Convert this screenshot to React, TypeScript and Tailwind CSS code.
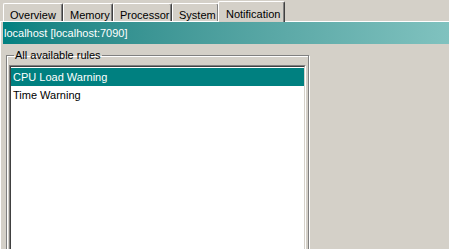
const tabs = [
  { label: "Overview", w: "w-[60px]" },
  { label: "Memory", w: "w-[50px]" },
  { label: "Processor", w: "w-[59px]" },
  { label: "System", w: "w-[47px]" },
];

const rules = ["CPU Load Warning", "Time Warning"];

export default function App() {
  return (
    <div className="w-[449px] h-[249px] overflow-hidden bg-[#d4d0c8] text-[11px] text-black font-['Liberation_Sans',Arial,sans-serif]">
      {/* tab strip */}
      <div className="h-[21px] flex items-end pl-[3px]">
        {tabs.map((t) => (
          <div
            key={t.label}
            className={`${t.w} h-[18px] flex items-start pt-[3px] pl-[6px] border-t border-l border-r border-t-white border-l-white border-r-[#404040] rounded-tl-[2px] rounded-tr-[2px] shadow-[inset_-1px_0_0_#808080]`}
          >
            {t.label}
          </div>
        ))}
        <div className="w-[67px] h-[21px] -ml-[1px] -mb-[1px] relative z-10 flex items-start pt-[4px] pl-[7px] border-t border-l border-r border-t-white border-l-white border-r-[#404040] rounded-tl-[2px] rounded-tr-[2px] shadow-[inset_-1px_0_0_#808080] bg-[#d4d0c8]">
          Notification
        </div>
      </div>

      {/* panel */}
      <div className="border-t border-l border-white pl-[2px]">
        <div className="h-[22px] flex items-center pl-[1px] text-[11px] text-white bg-gradient-to-r from-[#008080] to-[#80c2bf]">
          localhost [localhost:7090]
        </div>

        <fieldset className="ml-[3px] mt-[5px] w-[303px] h-[230px] border border-[#808080] shadow-[inset_1px_1px_0_#fff,1px_1px_0_#fff] px-[2px] pb-[2px]">
          <legend className="ml-[5px] px-[1px] leading-[13px]">All available rules</legend>
          <div className="mt-[3px] h-[200px] border border-t-[#808080] border-l-[#808080] border-b-white border-r-white">
            <div className="h-full border border-t-[#404040] border-l-[#404040] border-b-[#d4d0c8] border-r-[#d4d0c8] bg-white pt-[1px]">
              {rules.map((r, i) => (
                <div
                  key={r}
                  className={`h-[18px] flex items-center pl-[2px] ${i === 0 ? "bg-[#008080] text-white" : ""}`}
                >
                  {r}
                </div>
              ))}
            </div>
          </div>
        </fieldset>
      </div>
    </div>
  );
}
